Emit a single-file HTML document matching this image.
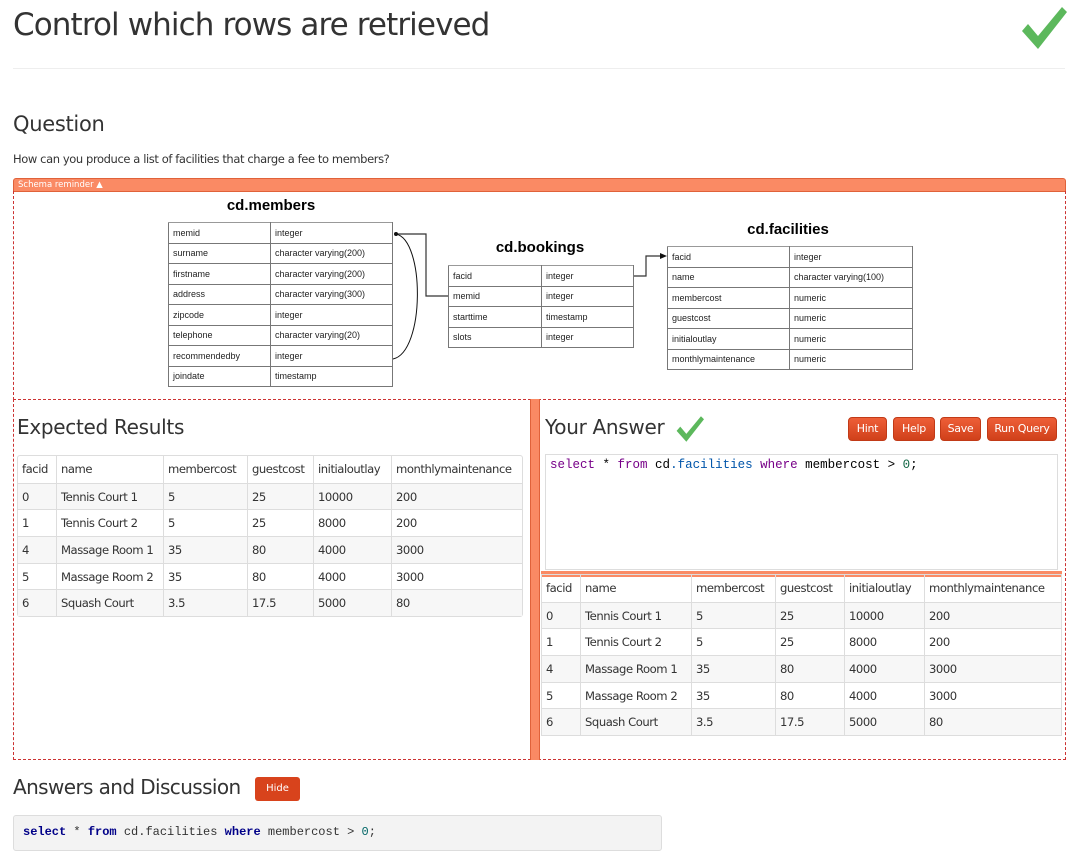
<!DOCTYPE html>
<html><head><meta charset="utf-8"><style>
*{box-sizing:border-box;margin:0;padding:0}
body{width:1089px;height:860px;background:#fff;font-family:"DejaVu Sans","Liberation Sans",sans-serif;color:#333;position:relative;overflow:hidden}
.a{position:absolute;white-space:nowrap}
h1{position:absolute;left:13px;top:7px;font-size:31px;font-weight:normal;color:#333;letter-spacing:-0.9px}
.hr{position:absolute;left:13px;top:68px;width:1052px;height:1px;background:#eee}
table.s{position:absolute;border-collapse:collapse;font-family:"Liberation Sans",Arial,sans-serif;font-size:9px;color:#222}
table.s td{border:1px solid #777;height:20.5px;padding:0 4px;border-top-color:#999}
.st{position:absolute;font-family:"Liberation Sans",Arial,sans-serif;font-weight:bold;font-size:15px;color:#000;transform:translateX(-50%)}
table.r{position:absolute;border-collapse:separate;border-spacing:0;font-size:11.6px;letter-spacing:-0.45px;color:#333;border:1px solid #ddd;border-radius:3px;table-layout:fixed}
table.r td{height:26.7px;padding:0 4px;border-left:1px solid #ddd;border-top:1px solid #ddd;white-space:nowrap;overflow:hidden}
table.r tr:first-child td{border-top:none}
table.r td:first-child{border-left:none}
table.r tr:nth-child(even) td{background:#f7f7f7}
.btn{position:absolute;top:417px;height:24px;background:linear-gradient(#ee5f38,#d0401a);border:1px solid #c13a17;border-radius:4px;color:#fff;font-size:11px;text-align:center;line-height:22px;letter-spacing:-0.3px}
.mono{font-family:"Liberation Mono","DejaVu Sans Mono",monospace}
</style></head><body>
<h1>Control which rows are retrieved</h1>
<svg class="a" style="left:1020px;top:5px" width="48" height="46" viewBox="0 0 48 46"><path d="M2 26 L8 19 L18 31 L42 2 L47 7 L18 44 Z" fill="#5cb85c"/></svg>
<div class="hr"></div>
<div class="a" style="left:13px;top:112px;font-size:21px;color:#333;letter-spacing:-0.3px">Question</div>
<div class="a" style="left:13px;top:152px;font-size:11.5px;color:#333;letter-spacing:-0.4px">How can you produce a list of facilities that charge a fee to members?</div>
<div class="a" style="left:13px;top:178px;width:1053px;height:14px;background:#fa8a64;border:1px solid #e0623a;border-radius:3px 3px 0 0;color:#fff;font-size:8.5px;line-height:12px;padding-left:4px">Schema reminder ▲</div>
<div class="a" style="left:13px;top:191px;width:1053px;height:209px;border:1px dashed #c33;border-top:none"></div>

<div class="st" style="left:271px;top:197px">cd.members</div>
<table class="s" style="left:168px;top:222px;width:225px">
<tr><td style="width:102px">memid</td><td>integer</td></tr>
<tr><td>surname</td><td>character varying(200)</td></tr>
<tr><td>firstname</td><td>character varying(200)</td></tr>
<tr><td>address</td><td>character varying(300)</td></tr>
<tr><td>zipcode</td><td>integer</td></tr>
<tr><td>telephone</td><td>character varying(20)</td></tr>
<tr><td>recommendedby</td><td>integer</td></tr>
<tr><td>joindate</td><td>timestamp</td></tr>
</table>
<div class="st" style="left:540px;top:239px">cd.bookings</div>
<table class="s" style="left:448px;top:265px;width:186px">
<tr><td style="width:93px">facid</td><td>integer</td></tr>
<tr><td>memid</td><td>integer</td></tr>
<tr><td>starttime</td><td>timestamp</td></tr>
<tr><td>slots</td><td>integer</td></tr>
</table>
<div class="st" style="left:788px;top:221px">cd.facilities</div>
<table class="s" style="left:667px;top:246px;width:246px">
<tr><td style="width:122px">facid</td><td>integer</td></tr>
<tr><td>name</td><td>character varying(100)</td></tr>
<tr><td>membercost</td><td>numeric</td></tr>
<tr><td>guestcost</td><td>numeric</td></tr>
<tr><td>initialoutlay</td><td>numeric</td></tr>
<tr><td>monthlymaintenance</td><td>numeric</td></tr>
</table>
<svg class="a" style="left:0;top:0" width="1089" height="400">
<path d="M448 296 H426 V234 H396" fill="none" stroke="#333" stroke-width="1.2"/>
<path d="M393 359 C425 352 425 240 396 234" fill="none" stroke="#111" stroke-width="1"/>
<circle cx="396" cy="234" r="2" fill="#111"/>
<path d="M634 276 H646 V256 H664" fill="none" stroke="#333" stroke-width="1.2"/>
<path d="M660 253 L667 256 L660 259 Z" fill="#111"/>
</svg>

<div class="a" style="left:13px;top:399px;width:1053px;height:361px;border:1px dashed #c33;border-top:none"></div>
<div class="a" style="left:530px;top:399px;width:10px;height:361px;background:#fa8a64;border-left:1px solid #e0623a;border-right:1px solid #e0623a"></div>
<div class="a" style="left:17px;top:415px;font-size:20px;color:#333;letter-spacing:-0.3px">Expected Results</div>
<table class="r" style="left:17px;top:455px;width:506px">
<tr><td style="width:38px">facid</td><td style="width:107px">name</td><td style="width:84px">membercost</td><td style="width:66px">guestcost</td><td style="width:78px">initialoutlay</td><td>monthlymaintenance</td></tr>
<tr><td>0</td><td>Tennis Court 1</td><td>5</td><td>25</td><td>10000</td><td>200</td></tr>
<tr><td>1</td><td>Tennis Court 2</td><td>5</td><td>25</td><td>8000</td><td>200</td></tr>
<tr><td>4</td><td>Massage Room 1</td><td>35</td><td>80</td><td>4000</td><td>3000</td></tr>
<tr><td>5</td><td>Massage Room 2</td><td>35</td><td>80</td><td>4000</td><td>3000</td></tr>
<tr><td>6</td><td>Squash Court</td><td>3.5</td><td>17.5</td><td>5000</td><td>80</td></tr>
</table>

<div class="a" style="left:545px;top:415px;font-size:20px;color:#333;letter-spacing:-0.3px">Your Answer</div>
<svg class="a" style="left:675px;top:415px" width="30" height="28" viewBox="0 0 48 46"><path d="M2 26 L8 19 L18 31 L42 2 L47 7 L18 44 Z" fill="#5cb85c"/></svg>
<div class="btn" style="left:848px;width:39px">Hint</div>
<div class="btn" style="left:893px;width:42px">Help</div>
<div class="btn" style="left:940px;width:41px">Save</div>
<div class="btn" style="left:987px;width:70px">Run Query</div>
<div class="a mono" style="left:545px;top:454px;width:513px;height:116px;border:1px solid #ddd;padding:3px 4px;font-size:12.5px;color:#000"><span style="color:#708">select</span> * <span style="color:#708">from</span> cd<span style="color:#05a">.facilities</span> <span style="color:#708">where</span> membercost &gt; <span style="color:#164">0</span>;</div>
<div class="a" style="left:541px;top:571px;width:521px;height:6px;background:#fa8a64"></div>
<table class="r" style="left:541px;top:574px;width:521px;border-radius:0">
<tr><td style="width:38px">facid</td><td style="width:111px">name</td><td style="width:84px">membercost</td><td style="width:69px">guestcost</td><td style="width:80px">initialoutlay</td><td>monthlymaintenance</td></tr>
<tr><td>0</td><td>Tennis Court 1</td><td>5</td><td>25</td><td>10000</td><td>200</td></tr>
<tr><td>1</td><td>Tennis Court 2</td><td>5</td><td>25</td><td>8000</td><td>200</td></tr>
<tr><td>4</td><td>Massage Room 1</td><td>35</td><td>80</td><td>4000</td><td>3000</td></tr>
<tr><td>5</td><td>Massage Room 2</td><td>35</td><td>80</td><td>4000</td><td>3000</td></tr>
<tr><td>6</td><td>Squash Court</td><td>3.5</td><td>17.5</td><td>5000</td><td>80</td></tr>
</table>

<div class="a" style="left:13px;top:775px;font-size:20px;color:#333;letter-spacing:-0.6px">Answers and Discussion</div>
<div class="a" style="left:255px;top:777px;width:45px;height:24px;background:#d8431c;border-radius:3px;color:#fff;font-size:10px;text-align:center;line-height:24px">Hide</div>
<div class="a mono" style="left:13px;top:815px;width:649px;height:36px;background:#f3f3f3;border:1px solid #ddd;border-radius:3px;padding:9px 9px;font-size:12px;color:#333"><b style="color:#008">select</b> * <b style="color:#008">from</b> cd.facilities <b style="color:#008">where</b> membercost &gt; <span style="color:#066">0</span>;</div>
</body></html>
